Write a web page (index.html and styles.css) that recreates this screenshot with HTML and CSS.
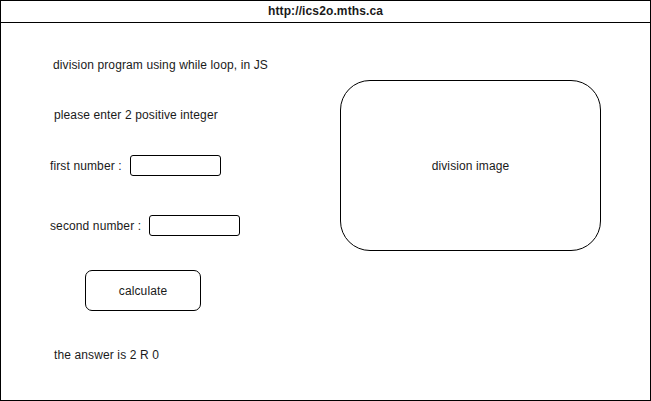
FILE: index.html
```html
<!DOCTYPE html>
<html lang="en">
<head>
    <meta charset="UTF-8">
    <meta name="viewport" content="width=device-width, initial-scale=1.0">
    <title>Division Program</title>
    <link rel="stylesheet" href="styles.css">
</head>
<body>
    <div class="browser-frame">
        <div class="address-bar">http://ics2o.mths.ca</div>
        <div class="page-body">
            <div class="left-col">
                <p class="intro">division program using while loop, in JS</p>
                <p class="prompt">please enter 2 positive integer</p>
                <div class="form-row first-row">
                    <label for="firstNumber">first number :</label>
                    <input type="text" id="firstNumber">
                </div>
                <div class="form-row second-row">
                    <label for="secondNumber">second number :</label>
                    <input type="text" id="secondNumber">
                </div>
                <button type="button">calculate</button>
                <p class="answer">the answer is 2 R 0</p>
            </div>
            <div class="image-box">division image</div>
        </div>
    </div>
</body>
</html>
```

FILE: styles.css
```css
* {
    box-sizing: border-box;
}
body {
    margin: 0;
    padding: 0;
    font-family: "Liberation Sans", Arial, sans-serif;
    font-size: 12px;
    letter-spacing: 0.12px;
    color: #1a1a1a;
    background-color: white;
}
.browser-frame {
    width: 651px;
    height: 401px;
    border: 1px solid #000;
    display: flex;
    flex-direction: column;
}
.address-bar {
    height: 22px;
    border-bottom: 1px solid #000;
    text-align: center;
    font-weight: bold;
    line-height: 21px;
}
.page-body {
    flex: 1;
    display: flex;
}
.left-col {
    width: 339px;
    display: flex;
    flex-direction: column;
    align-items: flex-start;
}
p {
    margin: 0;
    line-height: 14px;
}
.intro {
    margin-top: 35px;
    margin-left: 52px;
}
.prompt {
    margin-top: 36px;
    margin-left: 53px;
}
.form-row {
    display: flex;
    align-items: center;
    margin-left: 49px;
}
.first-row {
    margin-top: 33px;
}
.second-row {
    margin-top: 39px;
}
label {
    margin-right: 8px;
}
input {
    width: 91px;
    height: 21px;
    border: 1px solid #000;
    border-radius: 3px;
    padding: 0;
    background: white;
}
button {
    margin-top: 34px;
    margin-left: 84px;
    width: 116px;
    height: 41px;
    background: white;
    border: 1px solid #000;
    border-radius: 7px;
    font-family: inherit;
    font-size: 12px;
    letter-spacing: inherit;
    color: #1a1a1a;
    padding: 0;
}
.answer {
    margin-top: 37px;
    margin-left: 53px;
}
.image-box {
    margin-top: 57px;
    width: 261px;
    height: 171px;
    border: 1px solid #000;
    border-radius: 30px;
    display: flex;
    align-items: center;
    justify-content: center;
}
```
